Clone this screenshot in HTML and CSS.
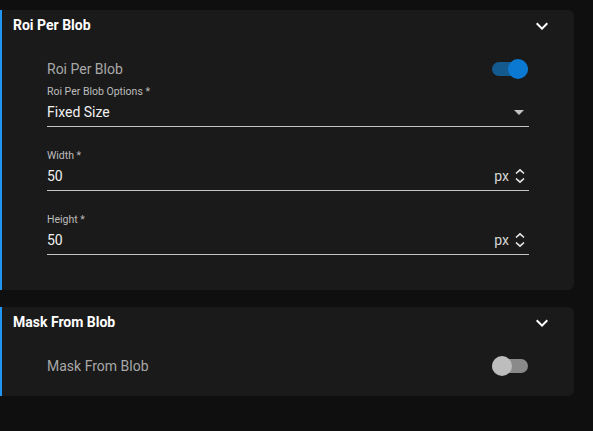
FILE: index.html
```html
<!DOCTYPE html>
<html lang="en">
<head>
<meta charset="utf-8">
<title>Blob settings</title>
<link rel="stylesheet" href="styles.css">
</head>
<body>
<div class="panel">
  <section class="card">
    <header class="card-head">
      <span class="card-title">Roi Per Blob</span>
      <svg class="chev" width="24" height="24" viewBox="0 0 24 24"><path d="M16.59 8.59 12 13.17 7.41 8.59 6 10l6 6 6-6z" fill="#fff"/></svg>
    </header>
    <div class="card-body">
      <div class="switch-row">
        <span class="switch-label">Roi Per Blob</span>
        <span class="switch on"><span class="track"></span><span class="knob"></span></span>
      </div>
      <div class="field first">
        <div class="field-label">Roi Per Blob Options *</div>
        <div class="field-input">
          <span class="value">Fixed Size</span>
          <svg class="drop" width="10" height="5" viewBox="0 0 10 5"><path d="M0 0l5 5 5-5z" fill="#c4c4c4"/></svg>
        </div>
      </div>
      <div class="field">
        <div class="field-label">Width *</div>
        <div class="field-input">
          <span class="value">50</span>
          <span class="unit">px</span>
          <svg class="spin" width="12" height="16" viewBox="0 0 12 16"><path d="M2 5.5 6 1.8 10 5.5M2 10.5 6 14.2 10 10.5" fill="none" stroke="#e6e6e6" stroke-width="1.7"/></svg>
        </div>
      </div>
      <div class="field">
        <div class="field-label">Height *</div>
        <div class="field-input">
          <span class="value">50</span>
          <span class="unit">px</span>
          <svg class="spin" width="12" height="16" viewBox="0 0 12 16"><path d="M2 5.5 6 1.8 10 5.5M2 10.5 6 14.2 10 10.5" fill="none" stroke="#e6e6e6" stroke-width="1.7"/></svg>
        </div>
      </div>
    </div>
  </section>
  <section class="card second">
    <header class="card-head">
      <span class="card-title">Mask From Blob</span>
      <svg class="chev" width="24" height="24" viewBox="0 0 24 24"><path d="M16.59 8.59 12 13.17 7.41 8.59 6 10l6 6 6-6z" fill="#fff"/></svg>
    </header>
    <div class="card-body short">
      <div class="switch-row">
        <span class="switch-label">Mask From Blob</span>
        <span class="switch off"><span class="track"></span><span class="knob"></span></span>
      </div>
    </div>
  </section>
</div>
</body>
</html>
```

FILE: styles.css
```css
html, body {
  margin: 0;
  padding: 0;
  background: #0f0f0f;
  font-family: Roboto, "Liberation Sans", Arial, sans-serif;
}

.panel {
  width: 574px;
  padding-top: 10px;
  display: flex;
  flex-direction: column;
  gap: 17px;
}

.card {
  background: #1a1a1a;
  border-left: 2px solid #2196f3;
  border-radius: 0 6px 6px 0;
}

.card-head {
  height: 30px;
  display: flex;
  align-items: center;
  justify-content: space-between;
  padding: 0 20px 0 11px;
}

.card-title {
  color: #fff;
  font-weight: 700;
  font-size: 14px;
}

.chev {
  display: block;
  margin-top: 2px;
}

.card-body {
  padding: 14px 45px 35px 45px;
}

.card-body.short {
  padding-bottom: 15px;
}

.switch-row {
  height: 30px;
  display: flex;
  align-items: center;
  justify-content: space-between;
}

.switch-label {
  color: #a8a8a8;
  font-size: 14px;
}

.switch {
  position: relative;
  width: 36px;
  height: 20px;
  margin-right: 1px;
}

.switch .track {
  position: absolute;
  left: 0;
  right: 0;
  top: 3px;
  height: 14px;
  border-radius: 7px;
}

.switch .knob {
  position: absolute;
  top: 0;
  width: 20px;
  height: 20px;
  border-radius: 50%;
}

.switch.on .track { background: #145a8e; }
.switch.on .knob { right: 0; background: #0b79d1; }
.switch.off .track { background: #8a8a8a; }
.switch.off .knob { left: 0; background: #bdbdbd; }

.field {
  margin-top: 22px;
}

.field.first {
  margin-top: 1px;
}

.field-label {
  color: #bdbdbd;
  font-size: 10.5px;
  line-height: 13px;
}

.field-input {
  display: flex;
  align-items: center;
  padding: 4px 0;
  line-height: 20px;
  border-bottom: 1px solid #c4c4c4;
}

.value {
  flex: 1;
  color: #f0f0f0;
  font-size: 14px;
}

.drop {
  display: block;
  margin-right: 5px;
}

.unit {
  color: #d6d6d6;
  font-size: 14px;
  margin-right: 5px;
}

.spin {
  display: block;
  margin-right: 3px;
}
```
